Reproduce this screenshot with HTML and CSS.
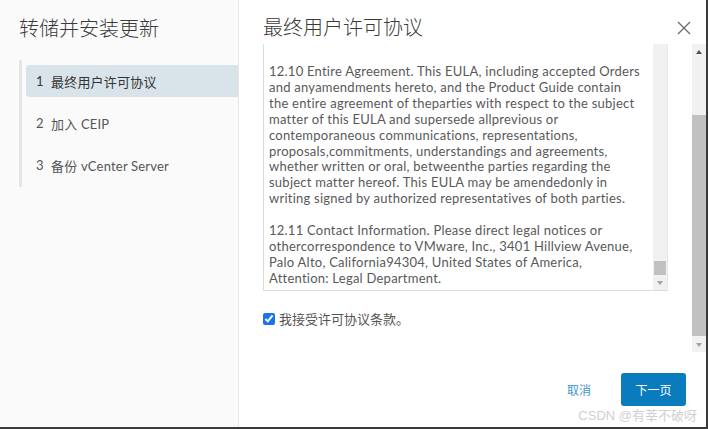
FILE: index.html
```html
<!DOCTYPE html>
<html lang="zh-CN">
<head>
<meta charset="utf-8">
<title>转储并安装更新</title>
<link rel="stylesheet" href="styles.css">
</head>
<body>
<div class="app">
  <aside class="side">
    <h1 class="side-title">转储并安装更新</h1>
    <nav class="steps">
      <div class="step active"><span class="num">1</span>最终用户许可协议</div>
      <div class="step"><span class="num">2</span>加入 CEIP</div>
      <div class="step"><span class="num">3</span>备份 vCenter Server</div>
    </nav>
  </aside>
  <main class="main">
    <header class="header">
      <h2 class="main-title">最终用户许可协议</h2>
      <svg class="close" width="14" height="14" viewBox="0 0 14 14"><path d="M1 1 L13 13 M13 1 L1 13" stroke="#6a6a6a" stroke-width="1.3" fill="none"/></svg>
    </header>
    <div class="scroll-area">
      <div class="scroll-content">
        <div class="eula">
          <div class="eula-text">
            <p>12.10 Entire Agreement. This EULA, including accepted Orders<br>and anyamendments hereto, and the Product Guide contain<br>the entire agreement of theparties with respect to the subject<br>matter of this EULA and supersede allprevious or<br>contemporaneous communications, representations,<br>proposals,commitments, understandings and agreements,<br>whether written or oral, betweenthe parties regarding the<br>subject matter hereof. This EULA may be amendedonly in<br>writing signed by authorized representatives of both parties.</p>
            <p>12.11 Contact Information. Please direct legal notices or<br>othercorrespondence to VMware, Inc., 3401 Hillview Avenue,<br>Palo Alto, California94304, United States of America,<br>Attention: Legal Department.</p>
          </div>
          <div class="sb inner-sb">
            <div class="sb-track inner-track"><div class="sb-thumb inner-thumb"></div></div>
            <div class="sb-btn"><span class="tri-down"></span></div>
          </div>
        </div>
        <label class="accept"><input type="checkbox" checked><span>我接受许可协议条款。</span></label>
      </div>
      <div class="sb outer-sb">
        <div class="sb-btn"><span class="tri-up"></span></div>
        <div class="sb-track outer-track"><div class="sb-thumb outer-thumb"></div></div>
        <div class="sb-btn"><span class="tri-down"></span></div>
      </div>
    </div>
    <footer class="footer">
      <button class="btn-link">取消</button>
      <button class="btn-primary">下一页</button>
    </footer>
    <div class="watermark">CSDN @有莘不破呀</div>
  </main>
</div>
</body>
</html>
```

FILE: styles.css
```css
* { box-sizing: border-box; }
html, body { margin: 0; padding: 0; }
body {
  width: 708px;
  height: 429px;
  overflow: hidden;
  background: #3a3a3a;
  font-family: Lato, "Noto Sans CJK SC", sans-serif;
}
.app {
  display: flex;
  width: 706px;
  height: 427px;
  background: #fff;
}
.side {
  width: 239px;
  flex: none;
  background: #fafafa;
  border-right: 1px solid #e8e8e8;
}
.side-title {
  margin: 0;
  padding: 15px 0 0 19px;
  height: 60px;
  font-size: 20px;
  font-weight: 300;
  color: #3a3a3a;
  line-height: 26px;
}
.steps {
  margin-left: 19px;
  border-left: 3px solid #e6e6e6;
  padding: 5px 0 5px 4px;
  display: flex;
  flex-direction: column;
  gap: 10px;
  height: 127px;
}
.step {
  height: 32px;
  display: flex;
  align-items: center;
  padding-left: 10px;
  font-size: 13px;
  color: #555;
  letter-spacing: 0.2px;
  border-radius: 3px 0 0 3px;
}
.step.active {
  background: #d9e4ea;
  color: #333;
}
.num { width: 15px; }
.main {
  flex: 1;
  position: relative;
  display: flex;
  flex-direction: column;
}
.header {
  height: 44px;
  flex: none;
  display: flex;
  align-items: flex-start;
  justify-content: space-between;
  padding: 14px 15px 0 24px;
}
.main-title {
  margin: 0;
  font-size: 20px;
  font-weight: 300;
  line-height: 26px;
  color: #3a3a3a;
}
.close { margin-top: 7px; }
.scroll-area {
  height: 308px;
  flex: none;
  display: flex;
}
.scroll-content {
  flex: 1;
  padding: 0 24px 0 24px;
}
.eula {
  height: 247px;
  display: flex;
  border-left: 1px solid #dcdcdc;
  border-bottom: 1px solid #dcdcdc;
  border-right: 1px solid #e6e6e6;
}
.eula-text {
  flex: 1;
  padding: 20px 0 0 5px;
  font-size: 13px;
  line-height: 15.9px;
  color: #595959;
  letter-spacing: 0.24px;
}
.eula-text p { margin: 0 0 16px 0; }
.sb {
  width: 14px;
  flex: none;
  display: flex;
  flex-direction: column;
  background: #f1f1f1;
}
.sb-track { flex: 1; position: relative; }
.sb-thumb {
  position: absolute;
  left: 1px;
  right: 1px;
  background: #c1c1c1;
}
.inner-thumb { top: 217px; height: 14px; }
.outer-thumb { top: 56px; height: 221px; left: 0; right: 0; }
.sb-btn {
  height: 15px;
  flex: none;
  display: flex;
  align-items: center;
  justify-content: center;
}
.tri-down, .tri-up {
  width: 0; height: 0;
  border-left: 3.5px solid transparent;
  border-right: 3.5px solid transparent;
}
.tri-down { border-top: 4px solid #a3a3a3; }
.tri-up { border-bottom: 4px solid #505050; }
.accept {
  display: flex;
  align-items: center;
  margin-top: 18px;
  font-size: 13px;
  color: #555;
}
.accept input {
  margin: 0 4px 0 0;
  width: 12px;
  height: 12px;
  accent-color: #1a73e8;
}
.footer {
  flex: 1;
  display: flex;
  align-items: flex-start;
  justify-content: flex-end;
  padding: 21px 20px 0 0;
  gap: 30px;
}
.btn-link {
  border: none;
  background: none;
  color: #3d95d0;
  font-family: inherit;
  font-size: 12px;
  padding: 0;
  height: 33px;
}
.btn-primary {
  border: none;
  background: #0a7bbd;
  color: #fff;
  font-family: inherit;
  font-size: 12px;
  width: 65px;
  height: 33px;
  border-radius: 3px;
  padding: 0;
}
.watermark {
  position: absolute;
  right: 9px;
  bottom: 3px;
  font-size: 13px;
  color: #d0d0d0;
  font-family: "Liberation Sans", "Noto Sans CJK SC", sans-serif;
}
```
